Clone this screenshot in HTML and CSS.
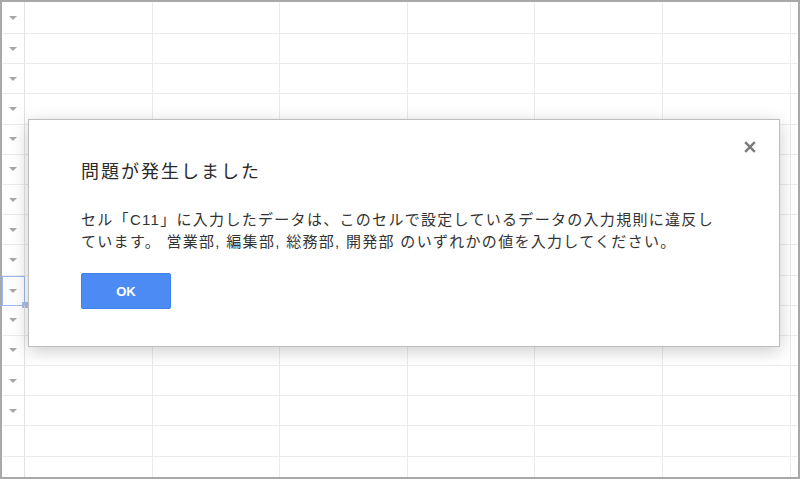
FILE: index.html
```
<!DOCTYPE html>
<html lang="ja">
<head>
<meta charset="utf-8">
<title>問題が発生しました</title>
<link rel="stylesheet" href="styles.css">
</head>
<body>
<div class="sheet">
  <div class="grid">
    <div class="row"><div class="cell head"><span class="caret"></span></div><div class="cell"></div><div class="cell"></div><div class="cell"></div><div class="cell"></div><div class="cell"></div><div class="cell"></div><div class="cell"></div></div>
    <div class="row"><div class="cell head"><span class="caret"></span></div><div class="cell"></div><div class="cell"></div><div class="cell"></div><div class="cell"></div><div class="cell"></div><div class="cell"></div><div class="cell"></div></div>
    <div class="row"><div class="cell head"><span class="caret"></span></div><div class="cell"></div><div class="cell"></div><div class="cell"></div><div class="cell"></div><div class="cell"></div><div class="cell"></div><div class="cell"></div></div>
    <div class="row"><div class="cell head"><span class="caret"></span></div><div class="cell"></div><div class="cell"></div><div class="cell"></div><div class="cell"></div><div class="cell"></div><div class="cell"></div><div class="cell"></div></div>
    <div class="row"><div class="cell head"><span class="caret"></span></div><div class="cell"></div><div class="cell"></div><div class="cell"></div><div class="cell"></div><div class="cell"></div><div class="cell"></div><div class="cell"></div></div>
    <div class="row"><div class="cell head"><span class="caret"></span></div><div class="cell"></div><div class="cell"></div><div class="cell"></div><div class="cell"></div><div class="cell"></div><div class="cell"></div><div class="cell"></div></div>
    <div class="row"><div class="cell head"><span class="caret"></span></div><div class="cell"></div><div class="cell"></div><div class="cell"></div><div class="cell"></div><div class="cell"></div><div class="cell"></div><div class="cell"></div></div>
    <div class="row"><div class="cell head"><span class="caret"></span></div><div class="cell"></div><div class="cell"></div><div class="cell"></div><div class="cell"></div><div class="cell"></div><div class="cell"></div><div class="cell"></div></div>
    <div class="row"><div class="cell head"><span class="caret"></span></div><div class="cell"></div><div class="cell"></div><div class="cell"></div><div class="cell"></div><div class="cell"></div><div class="cell"></div><div class="cell"></div></div>
    <div class="row"><div class="cell head selected"><span class="caret"></span><span class="handle"></span></div><div class="cell"></div><div class="cell"></div><div class="cell"></div><div class="cell"></div><div class="cell"></div><div class="cell"></div><div class="cell"></div></div>
    <div class="row"><div class="cell head"><span class="caret"></span></div><div class="cell"></div><div class="cell"></div><div class="cell"></div><div class="cell"></div><div class="cell"></div><div class="cell"></div><div class="cell"></div></div>
    <div class="row"><div class="cell head"><span class="caret"></span></div><div class="cell"></div><div class="cell"></div><div class="cell"></div><div class="cell"></div><div class="cell"></div><div class="cell"></div><div class="cell"></div></div>
    <div class="row"><div class="cell head"><span class="caret"></span></div><div class="cell"></div><div class="cell"></div><div class="cell"></div><div class="cell"></div><div class="cell"></div><div class="cell"></div><div class="cell"></div></div>
    <div class="row"><div class="cell head"><span class="caret"></span></div><div class="cell"></div><div class="cell"></div><div class="cell"></div><div class="cell"></div><div class="cell"></div><div class="cell"></div><div class="cell"></div></div>
    <div class="row"><div class="cell head"></div><div class="cell"></div><div class="cell"></div><div class="cell"></div><div class="cell"></div><div class="cell"></div><div class="cell"></div><div class="cell"></div></div>
    <div class="row last"><div class="cell head"></div><div class="cell"></div><div class="cell"></div><div class="cell"></div><div class="cell"></div><div class="cell"></div><div class="cell"></div><div class="cell"></div></div>
  </div>

  <div class="dialog" role="alertdialog">
    <button class="close" type="button" aria-label="閉じる">
      <svg width="12" height="12" viewBox="0 0 12 12"><path d="M1.2 1.2 L10.8 10.8 M10.8 1.2 L1.2 10.8" stroke="#7a7a7a" stroke-width="2.4" fill="none"/></svg>
    </button>
    <h2 class="dialog-title">問題が発生しました</h2>
    <p class="dialog-text">セル「C11」に入力したデータは、このセルで設定しているデータの入力規則に違反し<br>ています。 営業部, 編集部, 総務部, 開発部 のいずれかの値を入力してください。</p>
    <div class="dialog-actions">
      <button class="ok" type="button">OK</button>
    </div>
  </div>
</div>
</body>
</html>
```
FILE: styles.css
```
* { box-sizing: border-box; }

html, body {
  margin: 0;
  padding: 0;
  background: #ffffff;
}

body {
  font-family: "Liberation Sans", "Noto Sans CJK JP", sans-serif;
}

.sheet {
  position: relative;
  width: 800px;
  height: 479px;
  border: 2px solid #a8a8a8;
  overflow: hidden;
  background: #ffffff;
}

.grid {
  display: grid;
  grid-template-rows: 32px repeat(14, 30.2px) 1fr;
  height: 100%;
}

.row {
  display: grid;
  grid-template-columns: 23px repeat(6, 127.6px) 1fr;
}

.cell {
  border-right: 1px solid #ebebeb;
  border-bottom: 1px solid #ebebeb;
}

.row .cell:last-child { border-right: none; }
.row.last .cell { border-bottom: none; }

.cell.head {
  position: relative;
  display: flex;
  align-items: center;
  justify-content: center;
  border-right-color: #e2e2e2;
}

.caret {
  width: 0;
  height: 0;
  border-left: 4px solid transparent;
  border-right: 4px solid transparent;
  border-top: 4px solid #a6a6a6;
  margin-right: 1px;
}

.cell.selected {
  border: 1px solid #9bb8ee;
}

.handle {
  position: absolute;
  right: -4px;
  bottom: -3px;
  width: 6px;
  height: 6px;
  background: #a9c0ea;
}

.dialog {
  position: absolute;
  left: 26px;
  top: 117px;
  width: 752px;
  background: #ffffff;
  border: 1px solid #bdbdbd;
  box-shadow: 0 4px 16px rgba(0, 0, 0, 0.2);
  padding: 38px 52px 37px 52px;
  color: #333333;
}

.close {
  position: absolute;
  top: 21px;
  right: 23px;
  width: 12px;
  height: 12px;
  padding: 0;
  border: none;
  background: transparent;
  display: block;
}

.close svg { display: block; }

.dialog-title {
  margin: 0;
  font-size: 18px;
  line-height: 24px;
  font-weight: normal;
  letter-spacing: 2px;
  color: #2a2a2a;
  font-family: "Noto Sans CJK JP", sans-serif;
}

.dialog-text {
  margin: 27px 0 0 0;
  font-size: 15px;
  line-height: 22px;
  letter-spacing: 1.3px;
  white-space: nowrap;
  color: #333333;
}

.dialog-actions {
  margin-top: 20px;
  display: flex;
}

.ok {
  width: 90px;
  height: 36px;
  padding: 0;
  border: 1px solid #3f80ea;
  border-radius: 2px;
  background: #4c8bf3;
  color: #ffffff;
  font-family: "Liberation Sans", Arial, sans-serif;
  font-weight: bold;
  font-size: 13px;
}
```
